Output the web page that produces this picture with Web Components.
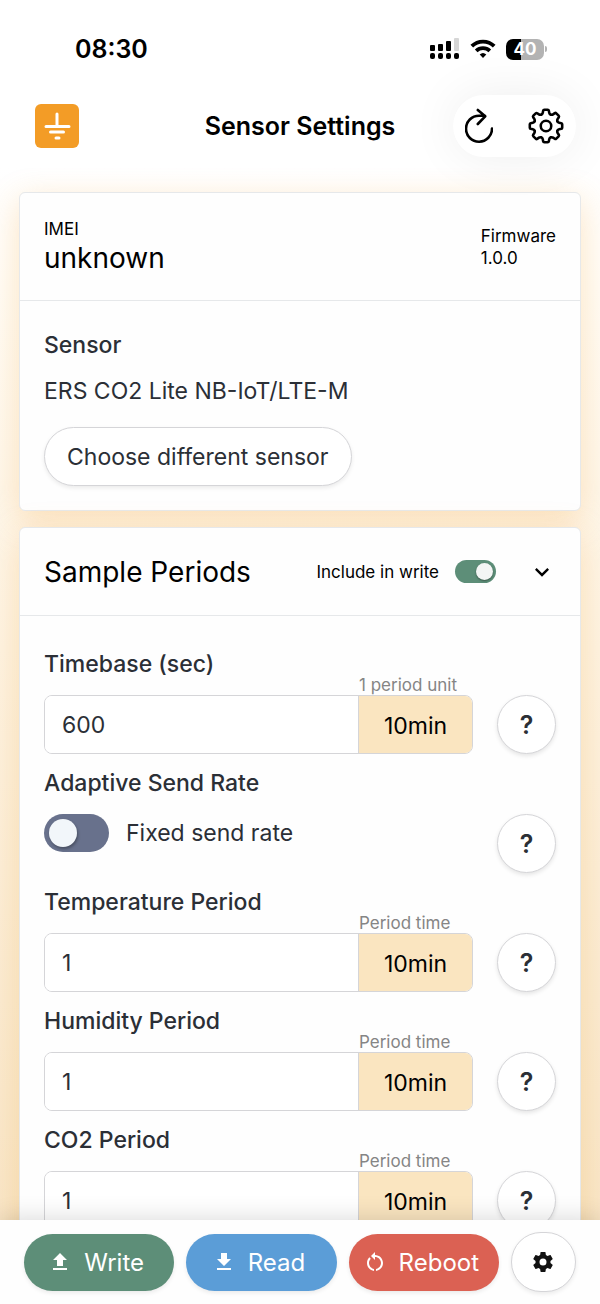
<!DOCTYPE html>
<html lang="en">
<head>
    <meta charset="UTF-8">
    <meta name="viewport" content="width=device-width, initial-scale=1.0">
    <title>Sensor Settings</title>
    <style>
        html, body { height: 100%; margin: 0; }
        body { font-family: Inter, "Liberation Sans", sans-serif; color: #2b2f36; background: #fff; }
    </style>
</head>
<body>

    <app-shell>
        <status-bar slot="top" time="08:30" battery="40"></status-bar>
        <app-header slot="top">Sensor Settings</app-header>

        <info-card>
            <device-info slot="head" imei="unknown" firmware="1.0.0"></device-info>
            <sensor-choice>ERS CO2 Lite NB-IoT/LTE-M</sensor-choice>
        </info-card>

        <info-card>
            <section-head slot="head">Sample Periods</section-head>
            <setting-field value="600" caption="1 period unit" unit="10min">Timebase (sec)</setting-field>
            <setting-switch text="Fixed send rate">Adaptive Send Rate</setting-switch>
            <setting-field value="1" caption="Period time" unit="10min">Temperature Period</setting-field>
            <setting-field value="1" caption="Period time" unit="10min">Humidity Period</setting-field>
            <setting-field value="1" caption="Period time" unit="10min">CO2 Period</setting-field>
        </info-card>

        <action-bar slot="bottom"></action-bar>
    </app-shell>

    <template id="shell-template">
        <style>
            :host { display: flex; flex-direction: column; height: 100vh; }
            header { position: relative; z-index: 1; }
            main {
                flex: 1; min-height: 0; overflow-y: auto; scrollbar-width: none;
                display: flex; flex-direction: column; gap: 16px;
                padding: 24px 19px;
                background: linear-gradient(#fff, #fffcf6 120px, #fdf3e2 480px, #f8e6c8);
            }
            footer { position: relative; z-index: 1; }
        </style>
        <header><slot name="top"></slot></header>
        <main><slot></slot></main>
        <footer><slot name="bottom"></slot></footer>
    </template>

    <template id="status-template">
        <style>
            :host { display: flex; justify-content: space-between; align-items: center; height: 92px; padding: 6px 53px 0 75px; box-sizing: border-box; color: #000; }
            time { font-size: 25px; font-weight: 600; }
            div { display: flex; align-items: center; gap: 10px; }
            .battery { display: flex; align-items: center; gap: 1px; }
            .level {
                width: 38px; height: 21px; border-radius: 7px; color: #fff;
                background: linear-gradient(90deg, #000 40%, #b3b3b3 40%);
                font-size: 17px; font-weight: 700; line-height: 21px; text-align: center;
            }
            .tip { width: 2px; height: 6px; border-radius: 0 2px 2px 0; background: #b3b3b3; }
        </style>
        <time></time>
        <div>
            <svg width="30" height="22" viewBox="0 0 30 22">
                <rect x="0" y="7" width="5" height="6" rx="1"/>
                <rect x="8" y="6" width="5" height="7" rx="1"/>
                <rect x="16" y="3" width="5" height="10" rx="1"/>
                <rect x="24" y="0" width="5" height="13" rx="1" fill="#d6d6d6"/>
                <rect x="0" y="15" width="5" height="6" rx="2"/>
                <rect x="8" y="15" width="5" height="6" rx="2"/>
                <rect x="16" y="15" width="5" height="6" rx="2"/>
                <rect x="24" y="15" width="5" height="6" rx="2"/>
            </svg>
            <svg width="26" height="20" viewBox="0 0 26 20" fill="none" stroke="#000" stroke-width="3.8">
                <path d="M1.8 7.2a16 16 0 0 1 22.4 0M6.2 11.9a9.8 9.8 0 0 1 13.6 0"/>
                <path d="M13 18.9l-3.3-3.4a4.8 4.8 0 0 1 6.6 0z" fill="#000" stroke="none"/>
            </svg>
            <span class="battery"><span class="level"></span><span class="tip"></span></span>
        </div>
    </template>

    <template id="header-template">
        <style>
            :host { display: grid; grid-template-columns: 1fr auto 1fr; align-items: center; height: 76px; padding: 0 24px 8px; box-sizing: border-box; color: #000; }
            .logo { display: block; width: 44px; height: 44px; margin-left: 11px; border-radius: 6px; background: #f39c26; }
            h1 { margin: 0; font-size: 25px; font-weight: 600; line-height: 32px; }
            nav {
                justify-self: end; display: flex; gap: 35px; padding: 13px 12px; box-sizing: border-box;
                height: 62px; border-radius: 31px; background: #fff; box-shadow: 0 0 50px rgba(0, 0, 0, .07);
            }
            button { display: flex; padding: 0; border: 0; background: none; }
        </style>
        <svg class="logo" viewBox="0 0 44 44" fill="none" stroke="#fff" stroke-width="3" stroke-linecap="round">
            <path d="M22 10v12M11 22.500h23M15.500 28h13M21 34h3"/>
        </svg>
        <h1><slot></slot></h1>
        <nav>
            <button aria-label="Reload">
                <svg width="28" height="36" viewBox="0 0 28 36" fill="none" stroke="#000" stroke-width="2.600" stroke-linecap="round" stroke-linejoin="round">
                    <path d="M27 20.500a13 13 0 1 1-13-12.800h6M12.800 2l7.400 6.300-7.400 7.700"/>
                </svg>
            </button>
            <button aria-label="Settings">
                <svg width="36" height="36" viewBox="-12 -12 24 24" fill="none" stroke="#000" stroke-width="1.700" stroke-linecap="round">
                    <defs><path id="tooth" d="M-3.140-7.580Q-2.300-7.950-2.150-8.800L-1.900-10.200Q-1.800-10.800-1.100-10.800H1.100Q1.800-10.800 1.900-10.200L2.150-8.800Q2.300-7.950 3.140-7.580"/></defs>
                    <use href="#tooth"/>
                    <use href="#tooth" transform="rotate(45)"/>
                    <use href="#tooth" transform="rotate(90)"/>
                    <use href="#tooth" transform="rotate(135)"/>
                    <use href="#tooth" transform="rotate(180)"/>
                    <use href="#tooth" transform="rotate(225)"/>
                    <use href="#tooth" transform="rotate(270)"/>
                    <use href="#tooth" transform="rotate(315)"/>
                    <circle r="3.500"/>
                </svg>
            </button>
        </nav>
    </template>

    <template id="card-template">
        <style>
            :host {
                display: block; flex: none; box-sizing: border-box; background: #fefefe;
                border: 1px solid #e6e8ea; border-radius: 6px; box-shadow: 0 8px 32px rgba(243, 156, 38, .25);
            }
            .head { padding: 0 24px; border-bottom: 1px solid #e6e8ea; }
            .body { display: flex; flex-direction: column; gap: 13px; padding: 32px 24px 24px; }
        </style>
        <div class="head"><slot name="head"></slot></div>
        <div class="body"><slot></slot></div>
    </template>

    <template id="device-template">
        <style>
            :host { display: flex; justify-content: space-between; align-items: center; height: 107px; color: #000; }
            dl { margin: 0; font-size: 17px; line-height: 22px; }
            dd { margin: 0; }
            .imei dd { font-size: 28px; line-height: 36px; }
        </style>
        <dl class="imei"><dt>IMEI</dt><dd></dd></dl>
        <dl class="firmware"><dt>Firmware</dt><dd></dd></dl>
    </template>

    <template id="choice-template">
        <style>
            :host { display: block; font-size: 23px; line-height: 32px; }
            h3 { margin: 0 0 18px; font-size: 23px; font-weight: 500; line-height: 24px; }
            p { margin: 0 0 20px; }
            button {
                height: 59px; padding: 0 22px; border: 1px solid #d5d5d8; border-radius: 30px;
                background: #fff; font: inherit; color: inherit; box-shadow: 0 2px 4px rgba(0, 0, 0, .08);
                display: block;
            }
        </style>
        <h3>Sensor</h3>
        <p><slot></slot></p>
        <button>Choose different sensor</button>
    </template>

    <template id="section-template">
        <style>
            :host { display: flex; align-items: center; height: 87px; color: #000; }
            h2 { flex: 1; margin: 0; font-size: 28px; font-weight: 400; line-height: 36px; }
            label { margin-right: 16px; font-size: 17px; }
            input {
                appearance: none; display: flex; justify-content: flex-end; width: 41px; height: 23px; margin: 0 32px 0 0;
                padding: 3px; box-sizing: border-box; border-radius: 12px; background: #5d8e78;
            }
            input::before { content: ""; width: 17px; height: 17px; border-radius: 50%; background: #f3f5f4; box-shadow: 0 1px 2px rgba(0, 0, 0, .4); }
            button { display: flex; padding: 0; border: 0; background: none; }
        </style>
        <h2><slot></slot></h2>
        <label for="include">Include in write</label>
        <input id="include" type="checkbox" role="switch" checked>
        <button aria-label="Collapse">
            <svg width="28" height="28" viewBox="0 0 24 24"><path d="M7.410 8.590L12 13.170l4.590-4.580L18 10l-6 6-6-6z"/></svg>
        </button>
    </template>

    <template id="field-template">
        <style>
            :host { display: grid; grid-template-columns: 1fr 114px 24px 59px; grid-template-rows: 47px 59px; font-size: 23px; }
            label { font-weight: 500; line-height: 32px; }
            small { align-self: end; font-size: 17px; line-height: 20px; color: #858585; white-space: nowrap; }
            help-button { grid-row: 2; grid-column: 4; }
            .group { grid-row: 2; grid-column: 1 / 3; display: flex; border: 1px solid #d5d5d8; border-radius: 8px; overflow: hidden; }
            input { flex: 1; min-width: 0; padding: 0 17px; border: 0; background: #fff; font: inherit; color: inherit; outline: 0; }
            output { width: 114px; box-sizing: border-box; border-left: 1px solid #d5d5d8; background: #fae5c0; color: #000; line-height: 60px; text-align: center; }
        </style>
        <label for="value"><slot></slot></label>
        <small></small>
        <div class="group"><input id="value" type="text" inputmode="numeric"><output for="value"></output></div>
        <help-button></help-button>
    </template>

    <template id="switch-template">
        <style>
            :host { display: grid; grid-template-columns: 1fr 59px; grid-template-rows: 47px 59px; font-size: 23px; }
            label { grid-column: 1 / 3; font-weight: 500; line-height: 32px; }
            .row { display: flex; align-items: center; gap: 17px; height: 38px; }
            input {
                appearance: none; display: flex; width: 65px; height: 38px; margin: 0; padding: 5px;
                box-sizing: border-box; border-radius: 19px; background: #68718c;
            }
            input::before { content: ""; width: 28px; height: 28px; border-radius: 50%; background: #f2f6fa; box-shadow: 1px 2px 3px rgba(0, 0, 0, .3); }
        </style>
        <label for="toggle"><slot></slot></label>
        <div class="row"><input id="toggle" type="checkbox" role="switch"><span></span></div>
        <help-button></help-button>
    </template>

    <template id="help-template">
        <style>
            :host { display: block; }
            button {
                width: 59px; height: 59px; padding: 0; border: 1px solid #d5d5d8; border-radius: 50%; background: #fff;
                font: inherit; font-size: 25px; font-weight: 600; color: #2b2f36; box-shadow: 0 2px 4px rgba(0, 0, 0, .1);
            }
        </style>
        <button>?</button>
    </template>

    <template id="action-template">
        <style>
            :host { display: flex; align-items: center; gap: 12px; height: 84px; padding: 0 24px; box-sizing: border-box; background: #fefefe; box-shadow: 0 0 24px rgba(0, 0, 0, .16); }
            button {
                flex: 1; display: flex; align-items: center; justify-content: center; gap: 12px; height: 57px; padding: 0 6px 0 0;
                border: 0; border-radius: 29px; font: inherit; font-size: 24px; color: #fff; box-shadow: 0 2px 4px rgba(0, 0, 0, .08);
            }
            svg { fill: currentColor; }
            .write { background: #5d8e78; }
            .read { background: #5b9dd7; }
            .reboot { background: #db6153; }
            .config { flex: 0 0 65px; height: 60px; padding: 0; border: 1px solid #d5d5d8; border-radius: 30px; background: #fff; color: #111; }
        </style>
        <button class="write"><svg width="24" height="24" viewBox="0 0 24 24"><path d="M5 20h14v-2H5v2zm0-10h4v6h6v-6h4l-7-7z"/></svg>Write</button>
        <button class="read"><svg width="24" height="24" viewBox="0 0 24 24"><path d="M19 9h-4V3H9v6H5l7 7 7-7zM5 18v2h14v-2H5z"/></svg>Read</button>
        <button class="reboot"><svg width="24" height="24" viewBox="0 0 24 24"><path d="M12 5V2L8 6l4 4V7c3.310 0 6 2.690 6 6 0 2.970-2.170 5.430-5 5.910v2.020c3.950-.49 7-3.850 7-7.930 0-4.420-3.580-8-8-8zm-6 8c0-1.650.67-3.150 1.760-4.240L6.340 7.340C4.900 8.790 4 10.790 4 13c0 4.080 3.050 7.440 7 7.930v-2.020c-2.830-.48-5-2.940-5-5.910z"/></svg>Reboot</button>
        <button class="config" aria-label="Configuration"><svg width="24" height="24" viewBox="0 0 24 24"><path d="M12,15.5A3.5,3.5 0 0,1 8.5,12A3.5,3.5 0 0,1 12,8.5A3.5,3.5 0 0,1 15.5,12A3.5,3.5 0 0,1 12,15.5M19.43,12.97C19.47,12.65 19.5,12.33 19.5,12C19.5,11.67 19.47,11.34 19.43,11L21.54,9.37C21.73,9.22 21.78,8.95 21.66,8.73L19.66,5.27C19.54,5.05 19.27,4.96 19.05,5.05L16.56,6.05C16.04,5.66 15.5,5.32 14.87,5.07L14.5,2.42C14.46,2.18 14.25,2 14,2H10C9.75,2 9.54,2.18 9.5,2.42L9.13,5.07C8.5,5.32 7.96,5.66 7.44,6.05L4.95,5.05C4.73,4.96 4.46,5.05 4.34,5.27L2.34,8.73C2.21,8.95 2.27,9.22 2.46,9.37L4.57,11C4.53,11.34 4.5,11.67 4.5,12C4.5,12.33 4.53,12.65 4.57,12.97L2.46,14.63C2.27,14.78 2.21,15.05 2.34,15.27L4.34,18.73C4.46,18.95 4.73,19.03 4.95,18.95L7.44,17.94C7.96,18.34 8.5,18.68 9.13,18.93L9.5,21.58C9.54,21.82 9.75,22 10,22H14C14.25,22 14.46,21.82 14.5,21.58L14.87,18.93C15.5,18.67 16.04,18.34 16.56,17.94L19.05,18.95C19.27,19.03 19.54,18.95 19.66,18.73L21.66,15.27C21.78,15.05 21.73,14.78 21.54,14.63L19.43,12.97Z"/></svg></button>
    </template>

    <script>

        // every element clones its own template into an open shadow root
        class TemplateElement extends HTMLElement {
            connectedCallback() {
                if (this.shadowRoot) return;
                const template = document.getElementById(this.constructor.template);
                this.attachShadow({mode:'open'});
                this.shadowRoot.append(template.content.cloneNode(true));
                this.fill();
            }
            fill() {}
            setText(selector, attribute) {
                this.shadowRoot.querySelector(selector).textContent = this.getAttribute(attribute);
            }
        }

        class AppShell extends TemplateElement { static template = 'shell-template'; }
        class AppHeader extends TemplateElement { static template = 'header-template'; }
        class InfoCard extends TemplateElement { static template = 'card-template'; }
        class SensorChoice extends TemplateElement { static template = 'choice-template'; }
        class SectionHead extends TemplateElement { static template = 'section-template'; }
        class HelpButton extends TemplateElement { static template = 'help-template'; }
        class ActionBar extends TemplateElement { static template = 'action-template'; }

        class StatusBar extends TemplateElement {
            static template = 'status-template';
            fill() {
                this.setText('time', 'time');
                this.setText('.level', 'battery');
            }
        }

        class DeviceInfo extends TemplateElement {
            static template = 'device-template';
            fill() {
                this.setText('.imei dd', 'imei');
                this.setText('.firmware dd', 'firmware');
            }
        }

        class SettingField extends TemplateElement {
            static template = 'field-template';
            fill() {
                this.shadowRoot.querySelector('input').value = this.getAttribute('value');
                this.setText('small', 'caption');
                this.setText('output', 'unit');
            }
        }

        class SettingSwitch extends TemplateElement {
            static template = 'switch-template';
            fill() {
                this.setText('span', 'text');
            }
        }

        customElements.define('app-shell', AppShell);
        customElements.define('status-bar', StatusBar);
        customElements.define('app-header', AppHeader);
        customElements.define('info-card', InfoCard);
        customElements.define('device-info', DeviceInfo);
        customElements.define('sensor-choice', SensorChoice);
        customElements.define('section-head', SectionHead);
        customElements.define('setting-field', SettingField);
        customElements.define('setting-switch', SettingSwitch);
        customElements.define('help-button', HelpButton);
        customElements.define('action-bar', ActionBar);

    </script>

</body>
</html>
